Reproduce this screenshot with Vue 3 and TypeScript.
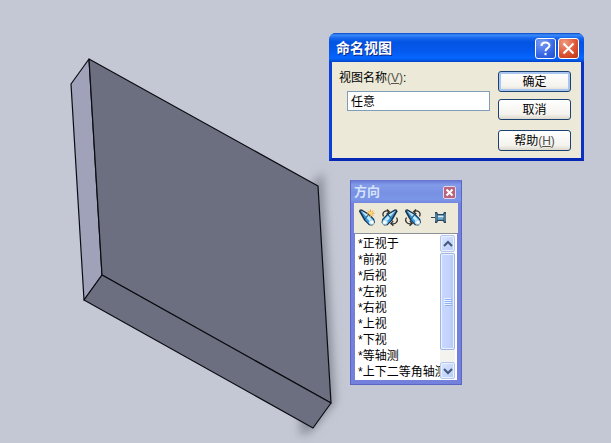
<script setup lang="ts">
import { ref } from 'vue'

const viewName = ref<string>('任意')
const selectedView = ref<string>('')
const views: string[] = [
  '正视于',
  '前视',
  '后视',
  '左视',
  '右视',
  '上视',
  '下视',
  '等轴测',
  '上下二等角轴测',
]
</script>

<template>
  <main class="viewport">
    <svg class="model" width="420" height="443" viewBox="0 0 420 443" aria-hidden="true">
      <defs>
        <filter id="soft" x="-40%" y="-20%" width="180%" height="140%">
          <feGaussianBlur stdDeviation="5" />
        </filter>
      </defs>
      <path class="shade" d="M312 184 L323 172 L335 402 L313 430 L300 436 Z" filter="url(#soft)" />
      <path class="side" d="M89 59 L71 84 L84 300 L102 275 Z" />
      <path class="face" d="M89 59 L318 186 L331 403 L102 275 Z" />
      <path class="base" d="M102 275 L331 403 L313 428 L84 300 Z" />
    </svg>

    <section class="dialog" aria-labelledby="dialog-title">
      <header class="dialog-bar">
        <h1 id="dialog-title">命名视图</h1>
        <button class="cap cap-help" type="button" aria-label="帮助">
          <svg width="19" height="19" viewBox="0 0 19 19">
            <path d="M5.5 7 C5.5 2.5 13.5 2.5 13.5 6.6 C13.5 9.2 9.5 9.2 9.5 12.2" />
            <path d="M9.5 14 V16.2" />
          </svg>
        </button>
        <button class="cap cap-close" type="button" aria-label="关闭">
          <svg width="19" height="19" viewBox="0 0 19 19">
            <path d="M4.5 4.5 L14.5 14.5 M14.5 4.5 L4.5 14.5" />
          </svg>
        </button>
      </header>
      <form class="dialog-body" @submit.prevent>
        <div class="field">
          <label for="view-name">视图名称<span class="key">(<u>V</u>)</span>:</label>
          <input id="view-name" v-model="viewName" type="text" />
        </div>
        <div class="actions">
          <button class="push primary" type="submit">确定</button>
          <button class="push" type="button">取消</button>
          <button class="push help" type="button">帮助<span class="key">(<u>H</u>)</span></button>
        </div>
      </form>
    </section>

    <section class="palette" aria-labelledby="palette-title">
      <header class="palette-bar">
        <h2 id="palette-title">方向</h2>
        <button class="mini-close" type="button" aria-label="关闭">
          <svg width="11" height="11" viewBox="0 0 11 11">
            <path d="M2.5 2.5 L8.5 8.5 M8.5 2.5 L2.5 8.5" />
          </svg>
        </button>
      </header>
      <div class="tools">
        <svg class="defs" width="0" height="0" aria-hidden="true">
          <defs>
            <g id="scope">
              <path d="M0 2.5 L0.5 0.8 L2.5 0.3 L10.5 5 L15.2 10 L16 13.5 L13.5 16.5 L10 16.3 L5 11.2 Z" fill="#17324c" />
              <path d="M1.3 1.6 L9.2 5.8 L6 10 Z" fill="#3c8fc8" />
              <path d="M1.8 1.5 L8.8 5.6 L7 7.6 Z" fill="#bfe6f6" />
              <path d="M9.8 5.9 L14.3 10.4 L10.4 15.2 L6 10.5 Z" fill="#3f9be6" />
              <path d="M9.5 6.8 L13 10.3 L11 12.6 L7.6 9.1 Z" fill="#c4eefd" />
              <circle cx="12.5" cy="13.2" r="2.6" fill="#b3e0fb" />
              <circle cx="12.8" cy="13.2" r="1.5" fill="#fff" />
            </g>
          </defs>
        </svg>
        <button class="tool" type="button" aria-label="新视图">
          <svg width="16" height="17" viewBox="0 0 16 17">
            <use href="#scope" />
            <path d="M11.5 0.5 V8 M8 4.2 H15.5 M9 1.6 L14.2 6.8 M14.2 1.6 L9 6.8" stroke="#f39a22" />
            <circle cx="11.6" cy="4.2" r="1.4" fill="#ffe17a" />
          </svg>
        </button>
        <button class="tool" type="button" aria-label="更新标准视图">
          <svg width="16" height="17" viewBox="0 0 16 17">
            <path d="M1.5 7.5 C-0.5 3.5 3 0.8 7 2.5 M5 0.3 L7.4 2.7 L4.7 5 M14.5 8.5 C17 12 13.5 16 9.3 14.5 M11.2 12 L8.8 14.5 L11.4 16.8" stroke="#33302b" stroke-width="1.2" fill="none" />
            <use href="#scope" transform="matrix(-1 0 0 1 15.5 0)" />
          </svg>
        </button>
        <button class="tool" type="button" aria-label="重设标准视图">
          <svg width="16" height="17" viewBox="0 0 16 17">
            <path d="M14.5 7.5 C16.5 3.5 13 0.8 9 2.5 M11 0.3 L8.6 2.7 L11.3 5 M1.5 8.5 C-1 12 2.5 16 6.7 14.5 M4.8 12 L7.2 14.5 L4.6 16.8" stroke="#33302b" stroke-width="1.2" fill="none" />
            <use href="#scope" />
          </svg>
        </button>
        <button class="tool pin" type="button" aria-label="保持可见">
          <svg width="16" height="17" viewBox="0 0 16 17">
            <path d="M0 8.5 H5" stroke="#2c4254" />
            <path d="M4 3 H6 L7 5 H12 L13 3 H15 V14 H13 L12 12 H7 L6 14 H4 Z" fill="#29475f" />
            <path d="M5 4.5 V12.5 M14 4.5 V12.5" stroke="#78a9c6" />
            <path d="M6.5 6.2 H12.5 V10.8 H6.5 Z" fill="#6ca8cc" />
            <path d="M7 7.5 H12.5" stroke="#d3edf8" stroke-width="1.4" />
          </svg>
        </button>
      </div>
      <div class="list">
        <select v-model="selectedView" size="9" aria-label="方向">
          <option v-for="name in views" :key="name" :value="name">*{{ name }}</option>
        </select>
        <div class="scroll">
          <button class="arrow" type="button" aria-label="向上滚动">
            <svg width="10" height="8" viewBox="0 0 10 8"><path d="M1 6 L5 2 L9 6" /></svg>
          </button>
          <div class="track">
            <div class="thumb"><i></i><i></i><i></i><i></i></div>
          </div>
          <button class="arrow" type="button" aria-label="向下滚动">
            <svg width="10" height="8" viewBox="0 0 10 8"><path d="M1 2 L5 6 L9 2" /></svg>
          </button>
        </div>
      </div>
    </section>
  </main>
</template>

<style>
body {
  margin: 0;
}
</style>

<style scoped>
.viewport {
  position: relative;
  min-height: 100vh;
  overflow: hidden;
  background: #c4c8d4;
  color: #000;
  font: 12px/16px "Liberation Sans", "Noto Sans CJK SC", sans-serif;
}
.viewport * {
  box-sizing: border-box;
}
button,
input,
select {
  margin: 0;
  padding: 0;
  border: 0;
  font: inherit;
  color: inherit;
}
h1,
h2 {
  flex: 1;
  margin: 0;
}
svg {
  display: block;
}
.model {
  position: absolute;
  top: 0;
  left: 0;
}
.model path {
  stroke: #0b0c12;
  stroke-width: 1.2;
  stroke-linejoin: round;
}
.model .shade {
  fill: #878c98;
  stroke: none;
}
.side {
  fill: #9fa2b9;
}
.face,
.base {
  fill: #6c6f80;
}

.dialog {
  position: absolute;
  top: 33px;
  left: 329px;
  width: 255px;
  border: solid #0a3fd8;
  border-width: 0 3px 3px;
  border-bottom-color: #0626b4;
  border-right-color: #0a30c4;
  border-radius: 7px 7px 0 0;
  background: #0a50e0;
}
.dialog-bar {
  display: flex;
  align-items: center;
  gap: 2px;
  height: 29px;
  margin: 0 -3px;
  padding: 1px 5px 0 7px;
  border-radius: 7px 7px 0 0;
  background: linear-gradient(#0a45c8 0, #3b8cf7 2px, #1767ee 5px, #0354e2 9px, #0459ee 18px, #0566ff 25px, #0450da 28px, #0340c0 29px);
}
.dialog-bar h1 {
  color: #fff;
  font-size: 14px;
  font-weight: 700;
  line-height: 20px;
  text-shadow: 1px 1px #0a2a88;
}
.cap {
  display: grid;
  place-items: center;
  width: 21px;
  height: 21px;
  border: 1px solid #fff;
  border-radius: 3px;
}
.cap path {
  fill: none;
  stroke: #fff;
  stroke-width: 2;
}
.cap-help {
  background: radial-gradient(circle at 30% 20%, #7d9df5, #3566e4 60%, #1f4fcf);
}
.cap-close {
  background: radial-gradient(circle at 30% 20%, #f09a80, #dc5030 60%, #b93614);
}
.dialog-body {
  display: flex;
  gap: 8px;
  padding: 9px 10px 7px 7px;
  background: #ece9d8;
}
.field {
  display: flex;
  flex: 1;
  flex-direction: column;
  gap: 6px;
  min-width: 0;
}
.field label {
  line-height: 14px;
}
.key {
  color: #55534c;
}
.field input {
  width: auto;
  min-width: 0;
  height: 20px;
  margin-left: 8px;
  padding: 0 3px 2px;
  border: 1px solid #7f9db9;
  background: #fff;
}
.actions {
  display: flex;
  flex-direction: column;
  gap: 7px;
  width: 73px;
}
.push {
  height: 21px;
  border: 1px solid #1c4272;
  border-radius: 3px;
  background: linear-gradient(#fff, #f4f3ee 75%, #dcd8cc);
  line-height: 18px;
}
.primary {
  box-shadow: inset 0 0 0 2px #a9c6f1;
}
.help {
  margin-top: 3px;
}

.palette {
  position: absolute;
  top: 180px;
  left: 350px;
  width: 112px;
  padding: 0 4px 4px;
  border: 1px solid #5a66c4;
  border-top-color: #6878d0;
  background: #7380dc;
}
.palette-bar {
  display: flex;
  align-items: center;
  height: 22px;
  margin: 0 -4px;
  padding: 0 5px 0 3px;
  background: linear-gradient(#6a7bd8, #829ce8 4px, #7890e2 12px, #7b97e8 18px, #7587de);
}
.palette-bar h2 {
  color: #d6e3fa;
  font-size: 13px;
  font-weight: 700;
  line-height: 20px;
}
.mini-close {
  display: grid;
  place-items: center;
  width: 13px;
  height: 13px;
  border: 1px solid #e6d6e6;
  border-radius: 2px;
  background: #b8647e;
}
.mini-close path {
  stroke: #fff;
  stroke-width: 2;
}
.tools {
  display: flex;
  align-items: center;
  height: 30px;
  margin: 0 -1px;
  padding: 0 0 2px 1px;
  background: #ece9d8;
}
.defs {
  position: absolute;
}
.tool {
  display: grid;
  place-items: center;
  width: 23px;
  height: 22px;
  background: none;
}
.tool svg {
  overflow: visible;
}
.pin {
  margin-left: 3px;
}
.list {
  display: flex;
  height: 147px;
  border-top: 1px solid #8b9199;
  background: #fff;
}
select {
  flex: 1;
  min-width: 0;
  height: 145px;
  overflow: hidden;
  background: #fff;
  outline: 0;
  scrollbar-width: none;
}
option {
  min-height: 16px;
  height: 16px;
  padding: 0 0 0 3px;
  line-height: 14px;
  overflow: hidden;
  white-space: nowrap;
}
.scroll {
  display: flex;
  flex-direction: column;
  width: 17px;
  padding: 1px 1px 1px 0;
}
.arrow {
  display: grid;
  place-items: center;
  width: 15px;
  height: 17px;
  border: 1px solid #b4c6ee;
  border-radius: 2px;
  background: linear-gradient(135deg, #dce6ff, #b8cbf8);
  box-shadow: inset 0 0 0 1px #e9f0ff;
}
.arrow path {
  fill: none;
  stroke: #42587f;
  stroke-width: 2;
}
.track {
  flex: 1;
  width: 15px;
  padding: 1px 0;
  background: #f4f3ee;
}
.thumb {
  display: flex;
  flex-direction: column;
  align-items: center;
  justify-content: center;
  gap: 1px;
  height: 90%;
  border: 1px solid #9fb5e6;
  border-radius: 2px;
  background: linear-gradient(90deg, #cad8fd, #c3d3fd 60%, #b4c8f6);
  box-shadow: inset 0 0 0 1px #e9f0ff;
}
.thumb i {
  width: 7px;
  height: 1px;
  background: #eef4fe;
  box-shadow: 1px 1px #8cb0f8;
}
</style>
